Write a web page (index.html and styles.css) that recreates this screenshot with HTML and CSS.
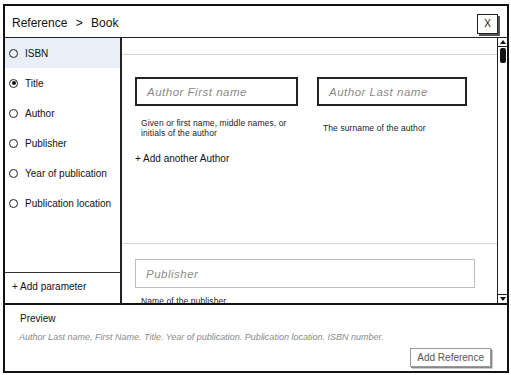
FILE: index.html
```html
<!DOCTYPE html>
<html lang="en">
<head>
    <meta charset="UTF-8">
    <meta name="viewport" content="width=device-width, initial-scale=1.0">
    <title>Reference &gt; Book</title>
    <link rel="stylesheet" href="styles.css">
</head>
<body>
    <div class="window">
        <div class="title-bar">
            <span class="title">Reference <span class="sep">&gt;</span> Book</span>
            <span class="close-btn">X</span>
        </div>

        <div class="content">
            <div class="sidebar">
                <div class="param-list">
                    <div class="param selected"><span class="radio"></span>ISBN</div>
                    <div class="param"><span class="radio checked"></span>Title</div>
                    <div class="param"><span class="radio"></span>Author</div>
                    <div class="param"><span class="radio"></span>Publisher</div>
                    <div class="param"><span class="radio"></span>Year of publication</div>
                    <div class="param"><span class="radio"></span>Publication location</div>
                </div>
                <div class="add-param">+ Add parameter</div>
            </div>

            <div class="main">
                <div class="form">
                    <div class="section top-section"></div>

                    <div class="section">
                        <div class="field-row">
                            <div class="field first">
                                <div class="input">Author First name</div>
                                <p class="help">Given or first name, middle names, or initials of the author</p>
                            </div>
                            <div class="field last">
                                <div class="input">Author Last name</div>
                                <p class="help">The surname of the author</p>
                            </div>
                        </div>
                        <div class="add-link">+ Add another Author</div>
                    </div>

                    <div class="section pub-section">
                        <div class="input light">Publisher</div>
                        <p class="help">Name of the publisher</p>
                    </div>
                </div>

                <div class="scrollbar">
                    <span class="arrow up"></span>
                    <span class="thumb"></span>
                    <span class="track"></span>
                    <span class="arrow down"></span>
                </div>
            </div>
        </div>

        <div class="footer">
            <div class="preview-label">Preview</div>
            <div class="preview-text">Author Last name, First Name. Title. Year of publication. Publication location. ISBN number.</div>
            <div class="footer-actions">
                <span class="btn">Add Reference</span>
            </div>
        </div>
    </div>
</body>
</html>
```

FILE: styles.css
```css
body {
    margin: 0;
    background-color: white;
    font-family: "Liberation Sans", Arial, sans-serif;
    color: #111;
}
.window {
    box-sizing: border-box;
    width: 506px;
    height: 369px;
    margin: 4px 0 0 3px;
    border: 2px solid #111;
    display: flex;
    flex-direction: column;
}
.title-bar {
    height: 31px;
    border-bottom: 1px solid #222;
    display: flex;
    align-items: center;
    justify-content: space-between;
    padding: 0 9px 0 7px;
    flex-shrink: 0;
}
.title {
    font-size: 12px;
    padding-top: 2px;
}
.sep {
    margin: 0 5px;
}
.close-btn {
    width: 19px;
    height: 18px;
    border: 1px solid #222;
    box-shadow: 2px 2px 0 #555;
    font-size: 10px;
    display: flex;
    align-items: center;
    justify-content: center;
    margin-top: 4px;
}
.content {
    display: flex;
    height: 265px;
    flex-shrink: 0;
}
.sidebar {
    width: 115px;
    border-right: 2px solid #222;
    display: flex;
    flex-direction: column;
}
.param-list {
    flex: 1;
}
.param {
    height: 30px;
    display: flex;
    align-items: center;
    font-size: 10px;
    padding-left: 4px;
}
.param.selected {
    background-color: #e8eff9;
}
.radio {
    box-sizing: border-box;
    width: 9px;
    height: 9px;
    border: 1px solid #222;
    border-radius: 50%;
    margin-right: 7px;
    position: relative;
}
.radio.checked::after {
    content: "";
    position: absolute;
    left: 1.5px;
    top: 1.5px;
    width: 4px;
    height: 4px;
    border-radius: 50%;
    background-color: #111;
}
.add-param {
    height: 31px;
    border-top: 1px solid #333;
    font-size: 10px;
    display: flex;
    align-items: center;
    padding: 0 0 3px 7px;
    box-sizing: border-box;
}
.main {
    flex: 1;
    display: flex;
    overflow: hidden;
}
.form {
    flex: 1;
    overflow: hidden;
}
.section {
    border-bottom: 1px solid #d6d6d6;
    padding: 22px 0 0 13px;
}
.top-section {
    height: 16px;
    padding: 0;
}
.field-row {
    display: flex;
    gap: 19px;
}
.field.first {
    width: 163px;
}
.field.last {
    width: 150px;
}
.input {
    box-sizing: border-box;
    height: 29px;
    border: 2px solid #222;
    font-size: 11.5px;
    letter-spacing: 0.5px;
    font-style: italic;
    color: #8a8a8a;
    display: flex;
    align-items: center;
    padding-left: 10px;
}
.input.light {
    width: 340px;
    border: 1.5px solid #bdbdbd;
}
.help {
    font-size: 8.5px;
    line-height: 10px;
    letter-spacing: 0.1px;
    margin: 12px 0 0 6px;
    color: #222;
}
.field.last .help {
    margin-top: 17px;
}
.add-link {
    font-size: 10px;
    padding: 15px 0 0 0;
    height: 90px;
}
.pub-section {
    border-bottom: none;
    padding-top: 15px;
}
.pub-section .help {
    margin-top: 8px;
}
.scrollbar {
    width: 9px;
    border-left: 1px solid #222;
    display: flex;
    flex-direction: column;
    align-items: center;
}
.arrow {
    box-sizing: border-box;
    width: 9px;
    height: 9px;
    display: flex;
    align-items: center;
    justify-content: center;
    border-bottom: 1px solid #222;
    flex-shrink: 0;
}
.arrow::after {
    content: "";
    border-left: 3px solid transparent;
    border-right: 3px solid transparent;
}
.arrow.up::after {
    border-bottom: 4px solid #111;
}
.arrow.down {
    border-bottom: none;
    border-top: 1px solid #222;
}
.arrow.down::after {
    border-top: 4px solid #111;
}
.thumb {
    width: 6px;
    height: 15px;
    border-radius: 2px;
    background-color: #111;
    margin-top: 1px;
}
.track {
    flex: 1;
}
.footer {
    flex: 1;
    border-top: 2px solid #111;
    padding: 8px 16px 0 14px;
}
.preview-label {
    font-size: 10px;
    padding-left: 1px;
}
.preview-text {
    font-size: 9px;
    font-style: italic;
    color: #8a8a8a;
    margin-top: 8px;
}
.footer-actions {
    display: flex;
    justify-content: flex-end;
    margin-top: 6px;
}
.btn {
    font-size: 10px;
    color: #555;
    border: 1px solid #999;
    box-shadow: 1px 1px 0 #888, 2px 2px 0 #ccc;
    padding: 3px 6px;
    background-color: white;
}
```
